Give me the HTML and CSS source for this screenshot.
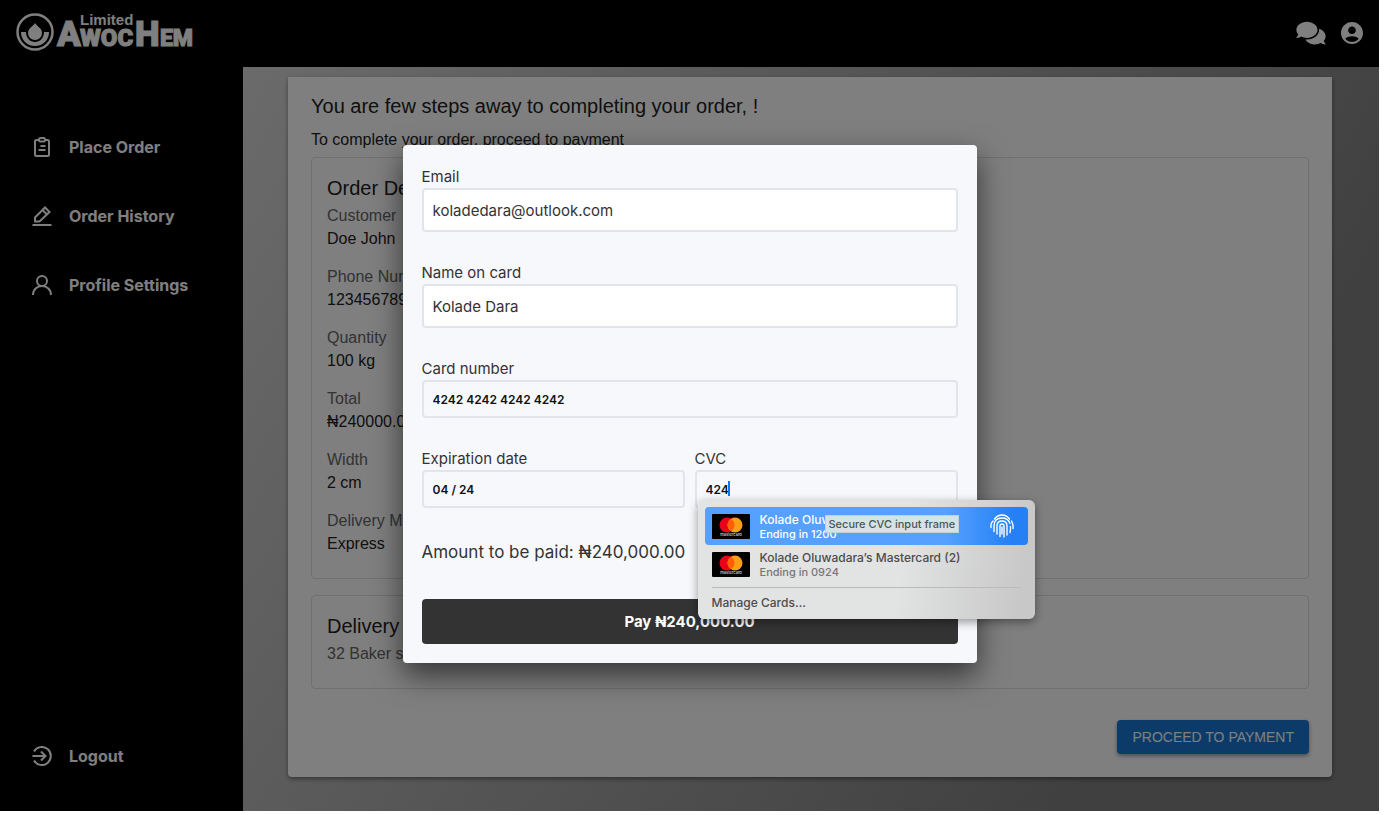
FILE: index.html
```html
<!DOCTYPE html>
<html lang="en">
<head>
<meta charset="utf-8">
<title>Awochem Limited</title>
<link rel="stylesheet" href="styles.css">
</head>
<body>
<div class="app">
  <header class="topbar">
    <a class="logo" href="#" aria-label="Awochem Limited">
      <svg width="178" height="42" viewBox="0 0 178 42">
        <circle cx="19" cy="20" r="17.500" fill="none" stroke="#fff" stroke-width="2.500"/>
        <path d="M19 11c2 3.500 7 5 7 10a7 7 0 0 1-14 0c0-5 5-6.500 7-10z" fill="#fff"/>
        <path d="M5 20h5c0 6 4 10 9 10s9-4 9-10h5c0 8-6 14-14 14S5 28 5 20z" fill="#fff"/>
        <g class="logo-word">
          <text x="41" y="34" font-size="35">A</text>
          <text x="64" y="34" font-size="24">WOC</text>
          <text x="119" y="34" font-size="35">H</text>
          <text x="144" y="34" font-size="23">EM</text>
        </g>
        <text class="logo-small" x="64" y="13" font-size="15">Limited</text>
      </svg>
    </a>
    <div class="topbar-actions">
      <button class="icon-button" type="button" aria-label="Messages">
        <svg width="30" height="26" viewBox="0 0 576 512" fill="#fff"><path d="M416 192c0-88.400-93.100-160-208-160S0 103.600 0 192c0 34.300 14.100 65.900 38 92-13.400 30.200-35.500 54.200-35.800 54.500-2.200 2.300-2.800 5.700-1.500 8.700S4.800 352 8 352c36.600 0 66.900-12.300 88.700-25 32.200 15.700 70.300 25 111.300 25 114.900 0 208-71.600 208-160zm122 220c23.900-26 38-57.700 38-92 0-66.900-53.500-124.200-129.300-148.100.9 6.600 1.300 13.300 1.300 20.100 0 105.900-107.700 192-240 192-10.800 0-21.300-.8-31.700-1.900C207.800 439.600 281.800 480 368 480c41 0 79.100-9.200 111.300-25 21.800 12.700 52.100 25 88.700 25 3.200 0 6.100-1.900 7.300-4.800 1.300-2.900.7-6.300-1.500-8.700-.3-.3-22.400-24.200-35.800-54.500z"/></svg>
      </button>
      <button class="icon-button" type="button" aria-label="Account">
        <svg width="22" height="22" viewBox="2 2 20 20" fill="#fff"><path d="M12 2C6.480 2 2 6.480 2 12s4.480 10 10 10 10-4.480 10-10S17.520 2 12 2zm0 4c1.930 0 3.500 1.570 3.500 3.500S13.930 13 12 13s-3.500-1.570-3.500-3.500S10.070 6 12 6zm0 14c-2.030 0-4.430-.82-6.140-2.880C7.550 15.800 9.680 15 12 15s4.450.8 6.140 2.120C16.430 19.180 14.030 20 12 20z"/></svg>
      </button>
    </div>
  </header>

  <div class="body">
    <nav class="sidebar">
      <a class="nav-item" href="#">
        <svg class="nav-icon" viewBox="0 0 20 20"><path d="M7 3H4.500Q3 3 3 4.500v13Q3 19 4.500 19h11q1.500 0 1.500-1.500v-13Q17 3 15.500 3H13M7 3q0-2 1.500-2h3Q13 1 13 3q0 1.500-1.500 1.500h-3Q7 4.500 7 3zM8.500 9h5M6.500 13h7"/></svg>
        Place Order</a>
      <a class="nav-item" href="#">
        <svg class="nav-icon" viewBox="0 0 20 20"><path d="M.5 19h19M3 11.500 13 1.500 17.500 6l-10 9.500H3zM10.500 4l4.500 4.500"/></svg>
        Order History</a>
      <a class="nav-item" href="#">
        <svg class="nav-icon" viewBox="0 0 20 20"><circle cx="10" cy="6" r="5"/><path d="M1 20c0-5.500 4-9 9-9s9 3.500 9 9"/></svg>
        Profile Settings</a>
      <a class="nav-item nav-logout" href="#">
        <svg class="nav-icon" viewBox="0 0 20 20"><path d="M2 5.500a9 9 0 1 1 0 9M.5 10H13M9 5.500l4.500 4.500L9 14.500"/></svg>
        Logout</a>
    </nav>

    <main class="main">
      <section class="card">
        <h1 class="title">You are few steps away to completing your order, !</h1>
        <p class="subtitle">To complete your order, proceed to payment</p>
        <section class="panel">
          <h2 class="panel-title">Order Details</h2>
          <dl class="details">
            <div><dt>Customer</dt><dd>Doe John</dd></div>
            <div><dt>Phone Number</dt><dd>1234567890</dd></div>
            <div><dt>Quantity</dt><dd>100 kg</dd></div>
            <div><dt>Total</dt><dd>₦240000.00</dd></div>
            <div><dt>Width</dt><dd>2 cm</dd></div>
            <div><dt>Delivery Method</dt><dd>Express</dd></div>
          </dl>
        </section>
        <section class="panel">
          <h2 class="panel-title">Delivery Address</h2>
          <p class="address">32 Baker street</p>
        </section>
        <button class="proceed" type="button">PROCEED TO PAYMENT</button>
      </section>
    </main>
  </div>

  <div class="overlay">
    <form class="modal">
      <div class="field">
        <label for="email">Email</label>
        <input class="input input-tall" id="email" type="email" value="koladedara@outlook.com">
      </div>
      <div class="field">
        <label for="name">Name on card</label>
        <input class="input input-tall" id="name" type="text" value="Kolade Dara">
      </div>
      <div class="field">
        <label for="number">Card number</label>
        <input class="input input-card" id="number" type="text" value="4242 4242 4242 4242">
      </div>
      <div class="field-row">
        <div class="field">
          <label for="expiry">Expiration date</label>
          <input class="input input-card" id="expiry" type="text" value="04 / 24">
        </div>
        <div class="field field-cvc">
          <label for="cvc">CVC</label>
          <input class="input input-card" id="cvc" type="text" value="424">
          <span class="caret"></span>
          <div class="autofill">
            <button class="saved-card saved-card-active" type="button">
              <svg class="card-art" viewBox="0 0 38 25"><rect width="38" height="25" rx="1" fill="#000"/><circle cx="15" cy="11" r="7.500" fill="#eb001b"/><circle cx="23" cy="11" r="7.500" fill="#f79e1b"/><path d="M19 4.660a7.500 7.500 0 0 1 0 12.680 7.500 7.500 0 0 1 0-12.680z" fill="#ff5f00"/><text x="19" y="22" text-anchor="middle" font-size="4" fill="#ddd">mastercard</text></svg>
              <span class="saved-text"><span class="saved-name">Kolade Oluwadara’s Mastercard</span><span class="saved-end">Ending in 1200</span></span>
              <svg class="fingerprint" viewBox="0 0 24 24"><path d="M4.500 5Q7.500 1 12 1t7.500 4M1 13.500Q.5 9 3 7M4 17.500V12q0-8 8-8 6 0 8 5.500M23 14.500q.5-4-1.500-7.500M7 20v-8q0-5 5-5t5 5v9M20 18.500q.7-3 .4-6M10 22.500V12q0-2 2-2t2 2v11M12 13v7"/></svg>
            </button>
            <button class="saved-card" type="button">
              <svg class="card-art" viewBox="0 0 38 25"><rect width="38" height="25" rx="1" fill="#000"/><circle cx="15" cy="11" r="7.500" fill="#eb001b"/><circle cx="23" cy="11" r="7.500" fill="#f79e1b"/><path d="M19 4.660a7.500 7.500 0 0 1 0 12.680 7.500 7.500 0 0 1 0-12.680z" fill="#ff5f00"/><text x="19" y="22" text-anchor="middle" font-size="4" fill="#ddd">mastercard</text></svg>
              <span class="saved-text"><span class="saved-name">Kolade Oluwadara’s Mastercard (2)</span><span class="saved-end">Ending in 0924</span></span>
            </button>
            <button class="manage" type="button">Manage Cards…</button>
            <span class="tooltip" role="tooltip">Secure CVC input frame</span>
          </div>
        </div>
      </div>
      <p class="amount">Amount to be paid: ₦240,000.00</p>
      <button class="pay" type="submit">Pay ₦240,000.00</button>
    </form>
  </div>
</div>
</body>
</html>
```
FILE: styles.css
```css
* { box-sizing: border-box; }

body {
  margin: 0;
  background: #fff;
  font-family: "Liberation Sans", Arial, sans-serif;
}

h1, h2, p, dl, dd { margin: 0; font-weight: 400; }
button { font: inherit; border: 0; padding: 0; cursor: pointer; }

.app {
  position: relative;
  display: flex;
  flex-direction: column;
  min-height: calc(100vh - 4px);
  margin: 0 5px 4px 0;
  background: #000;
}

.topbar {
  display: flex;
  align-items: center;
  justify-content: space-between;
  height: 67px;
  padding: 0 16px 2px;
}

.logo { display: flex; }
.logo svg { overflow: visible; }
.logo text { fill: #fff; font-family: Roboto, sans-serif; font-weight: 900; }
.logo-word text { stroke: #fff; stroke-width: 1; }
.logo .logo-small { font-family: "Liberation Sans", sans-serif; font-weight: 700; }

.topbar-actions { display: flex; align-items: center; gap: 15px; }
.icon-button { display: flex; background: none; }

.body { display: flex; flex: 1; }

.sidebar {
  display: flex;
  flex-direction: column;
  width: 243px;
  padding: 45px 0 21px;
}

.nav-item {
  display: flex;
  align-items: center;
  gap: 17px;
  height: 69px;
  padding-left: 32px;
  color: #fff;
  font-family: Inter, sans-serif;
  font-size: 16px;
  font-weight: 700;
  text-decoration: none;
}
.nav-logout { margin-top: auto; }
.nav-icon { width: 20px; height: 20px; fill: none; stroke: #fff; stroke-width: 2; }

.main {
  flex: 1;
  padding: 10px 47px 34px 45px;
  background: linear-gradient(120deg, #d6d6d6, #808080 80%);
}

.card {
  display: flex;
  flex-direction: column;
  padding: 14px 23px 23px;
  border-radius: 0 0 4px 4px;
  background: #fff;
  box-shadow: 0 2px 4px rgba(0, 0, 0, .4);
  color: #212121;
}

.title { font-size: 20px; line-height: 30px; }
.subtitle { margin: 7px 0 6px; font-size: 16px; line-height: 23px; }

.panel {
  padding: 14px 15px 23px;
  margin-bottom: 16px;
  border: 1px solid #e0e0e0;
  border-radius: 4px;
}
.panel-title { font-size: 20px; line-height: 32px; }
.details { display: grid; gap: 15px; font-size: 16px; line-height: 23px; }
.details dt, .address { color: #666; }
.address { font-size: 16px; line-height: 23px; }

.proceed {
  align-self: flex-end;
  margin-top: 15px;
  padding: 0 15px;
  border-radius: 4px;
  background: #1976d2;
  box-shadow: 0 2px 4px rgba(0, 0, 0, .4);
  color: #fff;
  font-size: 14px;
  line-height: 34px;
}

.overlay {
  position: absolute;
  inset: 0;
  display: flex;
  align-items: center;
  justify-content: center;
  padding-bottom: 3px;
  background: rgba(0, 0, 0, .5);
}

.modal {
  display: flex;
  flex-direction: column;
  gap: 30px;
  width: 574px;
  max-width: 100%;
  padding: 21px 19px 19px;
  border-radius: 4px;
  background: #f7f8fb;
  box-shadow: 0 12px 30px rgba(0, 0, 0, .6);
  color: #333;
  font-family: Inter, sans-serif;
  font-size: 15px;
}

.field { display: flex; flex-direction: column; }
.field label { line-height: 22px; }
.field-row { display: grid; grid-template-columns: 1fr 1fr; gap: 10px; }
.field-cvc { position: relative; }

.input {
  width: 100%;
  padding: 0 9px;
  border: 2px solid #e1e4e9;
  border-radius: 4px;
  outline: 0;
  background: #fff;
  color: #333;
  font-family: Inter, sans-serif;
  font-size: 15px;
}
.input-tall { height: 44px; }
.input-card { height: 38px; background: #f7f8fb; color: #111; font-size: 12px; font-weight: 600; }

.caret {
  position: absolute;
  top: 33px;
  left: 33px;
  width: 2px;
  height: 15px;
  background: #007aff;
}

.autofill {
  position: absolute;
  top: 52px;
  left: 3px;
  display: flex;
  flex-direction: column;
  width: 337px;
  padding: 7px 7px 2px;
  border-radius: 6px;
  background: linear-gradient(100deg, #e2e3e3 60%, #c8c8c8 95%);
  box-shadow: 0 3px 10px rgba(0, 0, 0, .4);
}

.saved-card {
  display: flex;
  align-items: center;
  gap: 10px;
  height: 38px;
  padding: 0 14px 0 7px;
  border-radius: 4px;
  background: none;
  color: #4c4c4c;
  font-weight: 500;
  text-align: left;
}
.saved-card-active { background: linear-gradient(90deg, #56a0ff 75%, #2480f4 95%); color: #fff; }
.card-art { width: 38px; height: 25px; }
.saved-text { display: flex; flex: 1; flex-direction: column; }
.saved-name { font-size: 12px; line-height: 15px; }
.saved-end { font-size: 11px; line-height: 14px; color: #777; }
.saved-card-active .saved-end { color: #fff; }
.fingerprint { width: 24px; height: 24px; fill: none; stroke: #fff; stroke-width: 1.400; stroke-linecap: round; }

.manage {
  margin: 4px 7px 0;
  border-top: 1px solid #bbb;
  background: none;
  color: #4c4c4c;
  font-size: 12px;
  font-weight: 500;
  line-height: 29px;
  text-align: left;
}

.tooltip {
  position: absolute;
  top: 15px;
  left: 127px;
  padding: 0 3px;
  border: 1px solid #c3d3d5;
  background: #d6e3e4;
  color: #4c5556;
  font-size: 11px;
  font-weight: 500;
  line-height: 16px;
  white-space: nowrap;
}

.amount { font-size: 17px; line-height: 28px; }

.pay {
  height: 45px;
  margin-top: 3px;
  border-radius: 4px;
  background: #333;
  color: #fff;
  font-size: 15px;
  font-weight: 700;
}
```
